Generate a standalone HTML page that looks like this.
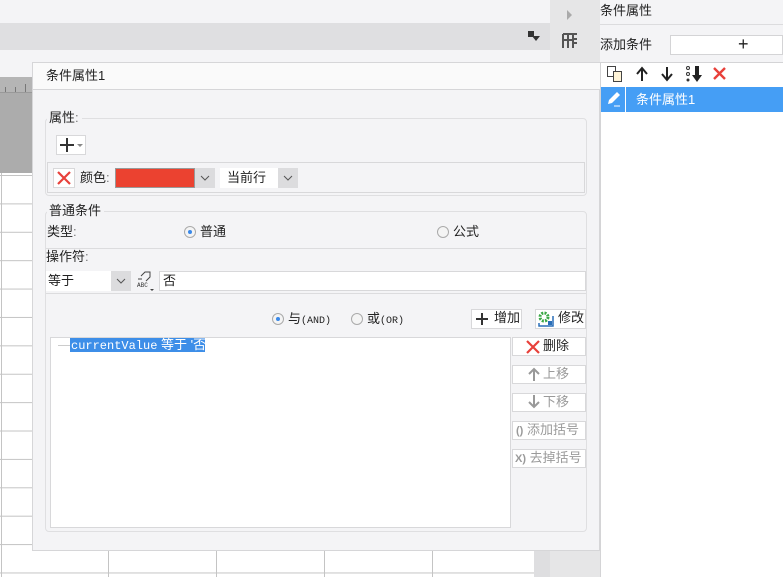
<!DOCTYPE html>
<html><head><meta charset="utf-8"><style>
*{margin:0;padding:0;box-sizing:border-box}
body{width:783px;height:577px;position:relative;overflow:hidden;background:#f4f4f6;font-family:"Liberation Sans","Noto Sans CJK SC",sans-serif;font-size:12px;color:#222}
.a{position:absolute}
.t{position:absolute;white-space:nowrap;line-height:14px}
.btn{position:absolute;background:#fff;border:1px solid #d8d8da;text-align:center;line-height:16px;font-size:12px;white-space:nowrap;overflow:hidden}
.dis{color:#9a9a9a}
.rad{position:absolute;width:12px;height:12px;border-radius:50%;border:1px solid #aaa;background:#f4f4f4}
.rad.on::after{content:"";position:absolute;left:3px;top:3px;width:4px;height:4px;border-radius:50%;background:#3a88e8}
</style></head><body>
<div class="a" style="left:0;top:23px;width:550px;height:27px;background:#dfdfe1"></div>
<div class="a" style="left:528px;top:31px;width:6px;height:6px;background:#333"></div>
<div class="a" style="left:532px;top:36px;width:0;height:0;border-left:4px solid transparent;border-right:4px solid transparent;border-top:5px solid #333"></div>
<div class="a" style="left:550px;top:0;width:50px;height:62px;background:#e6e6e7"></div>
<div class="a" style="left:567px;top:10px;width:0;height:0;border-top:5px solid transparent;border-bottom:5px solid transparent;border-left:5px solid #aaa"></div>
<svg class="a" style="left:561px;top:32px" width="18" height="18" viewBox="0 0 18 18"><path d="M2 2h14M2 2v14M7 2v14M12 7h4M12 11h4M12 2v14M2 8h10" stroke="#555" stroke-width="2" fill="none"/></svg>
<div class="a" style="left:0;top:77px;width:32px;height:16px;background:#b5b5b5;border-bottom:1px solid #999"></div>
<div class="a" style="left:5px;top:87px;width:1px;height:5px;background:#777"></div>
<div class="a" style="left:15px;top:87px;width:1px;height:5px;background:#777"></div>
<div class="a" style="left:25px;top:84px;width:1px;height:8px;background:#777"></div>
<div class="a" style="left:0;top:93px;width:32px;height:80px;background:#acacac"></div>
<div class="a" style="left:0;top:173px;width:534px;height:404px;background:#fff;
background-image:linear-gradient(#c4c4c4 1px,transparent 1px);background-size:100% 28.4px;background-position:0 2px"></div>
<div class="a" style="left:1px;top:173px;width:1px;height:404px;background:#c4c4c4"></div>
<div class="a" style="left:108px;top:550px;width:1px;height:27px;background:#c4c4c4"></div>
<div class="a" style="left:216px;top:550px;width:1px;height:27px;background:#c4c4c4"></div>
<div class="a" style="left:324px;top:550px;width:1px;height:27px;background:#c4c4c4"></div>
<div class="a" style="left:432px;top:550px;width:1px;height:27px;background:#c4c4c4"></div>
<div class="a" style="left:534px;top:550px;width:16px;height:27px;background:#dedee0"></div>
<div class="a" style="left:550px;top:62px;width:50px;height:515px;background:#e6e6e7"></div>
<div class="t" style="left:600px;top:4px;font-size:13px">条件属性</div>
<div class="a" style="left:600px;top:24px;width:183px;height:1px;background:#dcdcde"></div>
<div class="t" style="left:600px;top:38px;font-size:13px">添加条件</div>
<div class="a" style="left:670px;top:35px;width:113px;height:20px;background:#fff;border:1px solid #d4d4d6"></div>
<div class="t" style="left:738px;top:35px;font-size:18px;line-height:18px">+</div>
<div class="a" style="left:600px;top:62px;width:183px;height:515px;background:#fff;border-left:1px solid #d4d4d6;border-top:1px solid #d4d4d6"></div>
<svg class="a" style="left:606px;top:65px" width="18" height="18" viewBox="0 0 18 18"><rect x="1.5" y="1.5" width="8" height="10" fill="#fff" stroke="#444"/><rect x="7.5" y="6.5" width="8" height="10" fill="#fff4d8" stroke="#444"/></svg>
<svg class="a" style="left:635px;top:66px" width="14" height="16" viewBox="0 0 14 16"><path d="M7 15V3M2 8l5-6 5 6" stroke="#222" stroke-width="2" fill="none"/></svg>
<svg class="a" style="left:660px;top:66px" width="14" height="16" viewBox="0 0 14 16"><path d="M7 1v12M2 8l5 6 5-6" stroke="#222" stroke-width="2" fill="none"/></svg>
<svg class="a" style="left:685px;top:65px" width="20" height="18" viewBox="0 0 20 18"><circle cx="3" cy="3" r="1.5" fill="none" stroke="#333"/><circle cx="3" cy="9" r="1.5" fill="none" stroke="#333"/><circle cx="3" cy="15" r="1.5" fill="#333"/><path d="M12 1v10" stroke="#222" stroke-width="4"/><path d="M7 10h10l-5 7z" fill="#222"/></svg>
<svg class="a" style="left:712px;top:66px" width="15" height="15" viewBox="0 0 15 15"><path d="M2 2l11 11M13 2L2 13" stroke="#e8403a" stroke-width="2.4"/></svg>
<div class="a" style="left:601px;top:87px;width:182px;height:25px;background:#459ef5"></div>
<div class="a" style="left:625px;top:87px;width:1px;height:25px;background:#fff"></div>
<svg class="a" style="left:605px;top:90px" width="18" height="18" viewBox="0 0 18 18"><path d="M3 14l1-4 8-8 3 3-8 8z" fill="#fff"/><path d="M9 16h6" stroke="#fff"/></svg>
<div class="t" style="left:636px;top:93px;color:#fff;font-size:13px">条件属性1</div>
<div class="a" style="left:32px;top:62px;width:568px;height:489px;background:#f4f4f6;border:1px solid #d6d6d8"></div>
<div class="a" style="left:33px;top:63px;width:567px;height:27px;background:#fafafa;border-bottom:1px solid #d6d6d8"></div>
<div class="t" style="left:46px;top:69px;font-size:13px">条件属性1</div>
<div class="a" style="left:45px;top:118px;width:542px;height:78px;border:1px solid #dfdfe1;border-radius:4px"></div>
<div class="t" style="left:47px;top:111px;background:#f4f4f6;padding:0 3px 0 2px;font-size:13px">属性<span style="color:#777">:</span></div>
<div class="a" style="left:56px;top:135px;width:30px;height:20px;background:#fff;border:1px solid #d8d8da"></div>
<div class="a" style="left:60px;top:144px;width:14px;height:2px;background:#333"></div>
<div class="a" style="left:66px;top:138px;width:2px;height:14px;background:#333"></div>
<div class="a" style="left:77px;top:144px;border-left:3px solid transparent;border-right:3px solid transparent;border-top:3px solid #888"></div>
<div class="a" style="left:47px;top:162px;width:538px;height:31px;border:1px solid #d8d8da"></div>
<div class="a" style="left:53px;top:168px;width:22px;height:20px;background:#fff;border:1px solid #d8d8da"></div>
<svg class="a" style="left:57px;top:171px" width="14" height="14" viewBox="0 0 14 14"><path d="M1 1l12 12M13 1L1 13" stroke="#e8403a" stroke-width="2.2"/></svg>
<div class="t" style="left:80px;top:171px;font-size:13px">颜色<span style="color:#777">:</span></div>
<div class="a" style="left:115px;top:168px;width:80px;height:20px;background:#eb4230;border:1px solid #999"></div>
<div class="a" style="left:195px;top:168px;width:20px;height:20px;background:#dcdcde"></div>
<svg class="a" style="left:199px;top:174px" width="12" height="8"><path d="M2 2l4 4 4-4" stroke="#555" fill="none"/></svg>
<div class="a" style="left:220px;top:168px;width:58px;height:20px;background:#fff"></div>
<div class="t" style="left:227px;top:171px;font-size:13px">当前行</div>
<div class="a" style="left:278px;top:168px;width:20px;height:20px;background:#dcdcde"></div>
<svg class="a" style="left:282px;top:174px" width="12" height="8"><path d="M2 2l4 4 4-4" stroke="#555" fill="none"/></svg>
<div class="a" style="left:45px;top:211px;width:542px;height:321px;border:1px solid #dfdfe1;border-radius:4px"></div>
<div class="t" style="left:47px;top:204px;background:#f4f4f6;padding:0 3px 0 2px;font-size:13px">普通条件</div>
<div class="t" style="left:47px;top:225px;font-size:13px">类型<span style="color:#777">:</span></div>
<div class="rad on" style="left:184px;top:226px"></div>
<div class="t" style="left:200px;top:225px;font-size:13px">普通</div>
<div class="rad" style="left:437px;top:226px"></div>
<div class="t" style="left:453px;top:225px;font-size:13px">公式</div>
<div class="a" style="left:46px;top:248px;width:540px;height:1px;background:#dcdcde"></div>
<div class="t" style="left:46px;top:250px;font-size:13px">操作符<span style="color:#777">:</span></div>
<div class="a" style="left:46px;top:271px;width:65px;height:20px;background:#fff"></div>
<div class="t" style="left:48px;top:274px;font-size:13px">等于</div>
<div class="a" style="left:111px;top:271px;width:20px;height:20px;background:#dcdcde"></div>
<svg class="a" style="left:115px;top:277px" width="12" height="8"><path d="M2 2l4 4 4-4" stroke="#555" fill="none"/></svg>
<svg class="a" style="left:135px;top:270px" width="22" height="22" viewBox="0 0 22 22"><path d="M6 6l4-4h5v5l-4 4" fill="none" stroke="#444"/><path d="M3 9l4 0" stroke="#444"/><text x="2" y="17" font-size="6" font-family="Liberation Mono" fill="#333">ABC</text><path d="M15 19h4l-2 2z" fill="#444"/></svg>
<div class="a" style="left:159px;top:271px;width:427px;height:20px;background:#fff;border:1px solid #d8d8da"></div>
<div class="t" style="left:163px;top:274px;font-size:13px">否</div>
<div class="a" style="left:46px;top:293px;width:540px;height:1px;background:#dcdcde"></div>
<div class="rad on" style="left:272px;top:313px"></div>
<div class="t" style="left:288px;top:312px;font-size:13px">与<span style="font-size:10px;font-family:'Liberation Mono'">(AND)</span></div>
<div class="rad" style="left:351px;top:313px"></div>
<div class="t" style="left:367px;top:312px;font-size:13px">或<span style="font-size:10px;font-family:'Liberation Mono'">(OR)</span></div>
<div class="btn" style="left:471px;top:309px;width:51px;height:20px;text-align:left;padding-left:22px;font-size:13px">增加</div>
<div class="a" style="left:476px;top:318px;width:12px;height:2px;background:#333"></div>
<div class="a" style="left:481px;top:313px;width:2px;height:12px;background:#333"></div>
<div class="btn" style="left:535px;top:309px;width:51px;height:20px;text-align:left;padding-left:22px;font-size:13px">修改</div>
<svg class="a" style="left:538px;top:311px" width="16" height="16" viewBox="0 0 16 16"><circle cx="6" cy="6" r="4" fill="none" stroke="#3aa845" stroke-width="3" stroke-dasharray="2 1.2"/><path d="M1 12v3h14V5" fill="none" stroke="#2a6fb8" stroke-width="1.5"/><rect x="10" y="10" width="4" height="4" fill="#2a6fb8"/></svg>
<div class="a" style="left:50px;top:337px;width:461px;height:191px;background:#fff;border:1px solid #d8d8da"></div>
<div class="a" style="left:58px;top:345px;width:12px;height:1px;background:#ccc"></div>
<div class="t" style="left:70px;top:338px;height:14px;width:135px;background:#3d8ee8;color:#fff;padding:0 1px;font-size:13px"><span style="font-family:'Liberation Mono';font-size:12px">currentValue</span> 等于 '否'</div>
<div class="btn" style="left:512px;top:337px;width:74px;height:19px;padding-left:14px;font-size:13px">删除</div>
<svg class="a" style="left:526px;top:340px" width="14" height="14" viewBox="0 0 14 14"><path d="M1 1l12 12M13 1L1 13" stroke="#e8403a" stroke-width="2.2"/></svg>
<div class="btn dis" style="left:512px;top:365px;width:74px;height:19px;padding-left:14px;font-size:13px">上移</div>
<svg class="a" style="left:528px;top:367px" width="12" height="14"><path d="M6 14V3M1 7l5-5 5 5" stroke="#999" stroke-width="2" fill="none"/></svg>
<div class="btn dis" style="left:512px;top:393px;width:74px;height:19px;padding-left:14px;font-size:13px">下移</div>
<svg class="a" style="left:528px;top:395px" width="12" height="14"><path d="M6 0v11M1 7l5 5 5-5" stroke="#999" stroke-width="2" fill="none"/></svg>
<div class="btn dis" style="left:512px;top:421px;width:74px;height:19px;text-align:left;padding-left:3px;font-size:13px"><b style="font-size:11px">()</b> 添加括号</div>
<div class="btn dis" style="left:512px;top:449px;width:74px;height:19px;text-align:left;padding-left:2px;font-size:13px"><b style="font-size:11px">X)</b> 去掉括号</div>
</body></html>
